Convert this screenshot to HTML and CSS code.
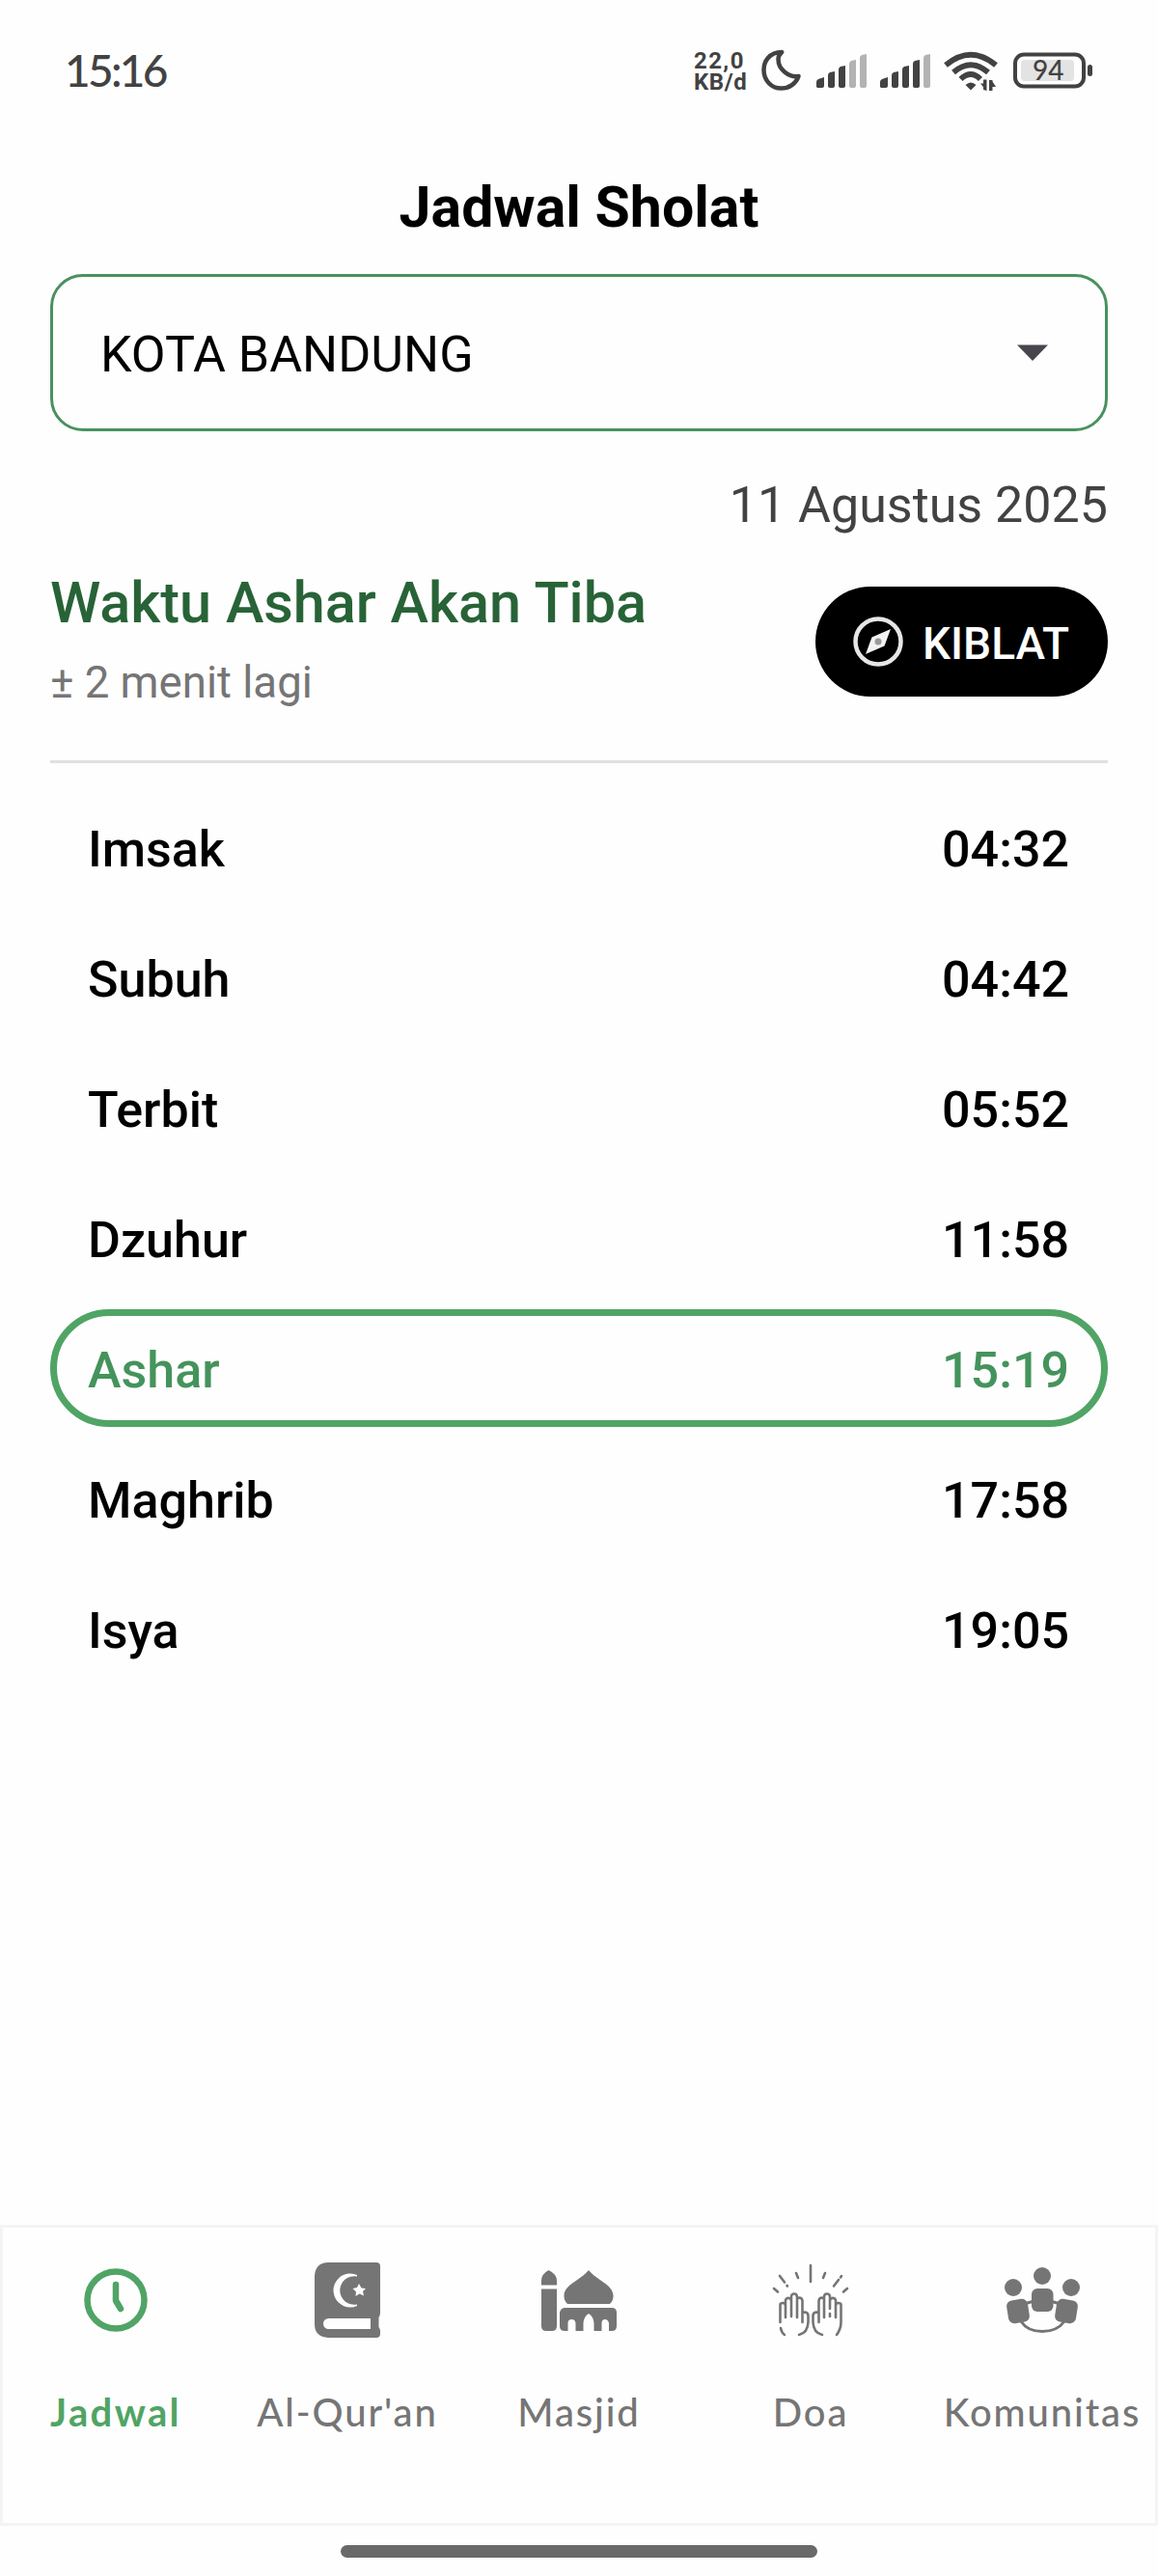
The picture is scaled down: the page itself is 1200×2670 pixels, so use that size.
FILE: index.html
```html
<!DOCTYPE html>
<html lang="id">
<head>
<meta charset="utf-8">
<title>Jadwal Sholat</title>
<link rel="stylesheet" href="styles.css">
</head>
<body>
<div class="screen">
  <header class="status">
    <span class="clock">15:16</span>
    <div class="speed"><span class="rate">22,0</span><span>KB/d</span></div>
    <svg class="sys" width="420" height="90" viewBox="0 0 420 90" fill="#424242">
      <path d="M30.200 24C17 24 11.500 34 11.500 42.500C11.500 53 19 61.500 29.500 61.500C38 61.500 45 56.500 47.500 49C37.500 50.500 26.500 42 26.500 31.500C26.500 28.500 28 26 30.200 24Z" fill="none" stroke="#424242" stroke-width="4.500" stroke-linejoin="round"/>
      <path d="M66 60V55Q66 53 68 52L74 50V59Q74 61 72 61H67ZM78 59V48Q78 46 80 45L85 44V59Q85 61 83 61H80Q78 61 78 59ZM89 59V42Q89 40 91 39L96 38V59Q96 61 94 61H91Q89 61 89 59Z"/>
      <path d="M100 59V36Q100 34 102 33L107 32V59Q107 61 105 61H102Q100 61 100 59ZM111 59V30Q111 28 113 27L118 26V59Q118 61 116 61H113Q111 61 111 59Z" fill="#b3b3b3"/>
      <path d="M132 60V55Q132 53 134 52L140 50V59Q140 61 138 61H133ZM144 59V48Q144 46 146 45L151 44V59Q151 61 149 61H146Q144 61 144 59ZM155 59V42Q155 40 157 39L162 38V59Q162 61 160 61H157Q155 61 155 59ZM166 59V36Q166 34 168 33L173 32V59Q173 61 171 61H168Q166 61 166 59Z"/>
      <path d="M177 59V30Q177 28 179 27L184 26V59Q184 61 182 61H179Q177 61 177 59Z" fill="#b3b3b3"/>
      <g fill="none" stroke="#424242" stroke-width="5.800">
        <path d="M200 37.500Q226 16 252 37.500"/><path d="M208 45Q226 29.500 244 45"/><path d="M215.500 52Q226 42 236 52"/>
      </g>
      <path d="M220.500 58Q226 53 231.500 58L226 63.500Z"/>
      <path d="M239 63V52.500H242.500V64ZM242 64L236 56.500H239.500ZM245 53H248.500V64H245ZM247.500 53L252 60H248Z"/>
      <rect x="272" y="26.500" width="71" height="33" rx="9" fill="none" stroke="#424242" stroke-width="4"/>
      <rect x="278" y="32" width="55" height="22" rx="4" fill="#e3e3e3"/>
      <rect x="347" y="37" width="5" height="12" rx="2.500"/>
      <text class="battery-text" x="290" y="53">94</text>
    </svg>
  </header>

  <h1 class="title">Jadwal Sholat</h1>

  <main class="content">
    <div class="select">
      <span>KOTA BANDUNG</span>
      <svg width="32" height="18" viewBox="0 0 32 18"><path d="M0 .5H32L16 17Z" fill="#49454f"/></svg>
    </div>
    <p class="date">11 Agustus 2025</p>
    <section class="next">
      <div>
        <h2 class="next-title">Waktu Ashar Akan Tiba</h2>
        <p class="next-sub">± 2 menit lagi</p>
      </div>
      <button class="kiblat">
        <svg width="52" height="52" viewBox="0 0 52 52">
          <circle cx="26" cy="26" r="23.500" fill="none" stroke="#e6e6e6" stroke-width="4.500"/>
          <path d="M39 13L32.500 30.500L13 39L19.500 21.500Z" fill="#f2f2f2"/><circle cx="26" cy="26" r="3.500" fill="#999"/>
        </svg>
        <span>KIBLAT</span>
      </button>
    </section>
    <ul class="times">
      <li><span>Imsak</span><span>04:32</span></li>
      <li><span>Subuh</span><span>04:42</span></li>
      <li><span>Terbit</span><span>05:52</span></li>
      <li><span>Dzuhur</span><span>11:58</span></li>
      <li class="active"><span>Ashar</span><span>15:19</span></li>
      <li><span>Maghrib</span><span>17:58</span></li>
      <li><span>Isya</span><span>19:05</span></li>
    </ul>
  </main>

  <nav class="tabs">
    <a class="tab tab-active">
      <svg width="80" height="80" viewBox="0 0 80 80" fill="none" stroke="#50a465">
        <circle cx="40" cy="40" r="29.500" stroke-width="6.500"/>
        <path d="M40 24V40.500L45 49" stroke-width="6.500" stroke-linecap="round" stroke-linejoin="round"/>
      </svg>
      <span>Jadwal</span>
    </a>
    <a class="tab">
      <svg width="80" height="80" viewBox="0 0 80 80" fill="#757575">
        <path fill-rule="evenodd" d="M20 1H70Q74 1 74 5V53Q74 56 72.500 58V68Q74 70 74 72V75Q74 79 70 79H20Q6 78 6 65V15Q7 1 20 1ZM20.500 59A5.300 5.300 0 0 0 20.500 70H64V59ZM50 14Q47 12.500 43 12.500A17.500 17.500 0 0 0 43 47.500Q47 47.500 50 46V44.500A14.800 14.800 0 1 1 50 15.500ZM52 23L50 27L45.500 28L49 31.500L48.500 36L52.500 33.500L57 35.500L56 31L59 28L54.500 27.500Z"/>
      </svg>
      <span>Al-Qur'an</span>
    </a>
    <a class="tab">
      <svg width="80" height="80" viewBox="0 0 80 80" fill="#757575">
        <path d="M1 24.500V20Q1 13 8.500 9Q17 13 17 20V24.500ZM1 28.500H17V67Q17 72 12 72H6Q1 72 1 67ZM28 44Q24 40 24.500 35C25 24 42 19 50 9C58 19 75 24 75.500 35Q76 40 72 44ZM26 48H74Q79 48 79 53V67Q79 72 74 72H71V64Q70 60 67 60Q63.500 60 63.500 64V72H55.500V64Q55 57 50 54Q45 57 44.500 64V72H36.500V64Q36 60 32.500 60Q28.500 60 28.500 64V72H25Q20 72 20 67V53Q21 48 26 48Z"/>
      </svg>
      <span>Masjid</span>
    </a>
    <a class="tab">
      <svg width="80" height="80" viewBox="0 0 80 80" fill="none" stroke="#757575" stroke-width="2.600" stroke-linecap="round" stroke-linejoin="round">
        <path d="M40 4V21M25 12L27 17M55 12L53 17M8 15L13 21.500M15.500 25L16 25.500M72 15L71 16.500M69 19L64 25.500M2 28L6 31.500M78 28L74 31.500"/>
        <path d="M8.500 63V45Q8.500 43 11.500 43Q14 43 14 46V58M14 46V40Q15 37.500 17.500 38Q20 38.500 20 41V57M20 41V36Q20.500 33.500 23 33.500Q26 33.500 26 37V58M26 39Q26.500 37.500 28.500 37.500Q31.500 38 31.500 41V63M31.500 54Q31.500 52.500 34 52.500Q37.500 53 37.500 56V63Q37 74 28 76M9 69Q10 74 13 76"/>
        <path d="M67 76Q71.500 70 71.500 63V45Q71.500 43 68.500 43Q66 43 66 46V58M66 46V40Q65 37.500 62.500 38Q60 38.500 60 41V49M60 54V57M60 41V36Q59.500 33.500 57 33.500Q54 33.500 54 37V58M54 39Q53.500 37.500 51.500 37.500Q48.500 38 48.500 41V63M48.500 54Q48.500 52.500 46 52.500Q42.500 53 42.500 56V63Q43 74 52 76"/>
      </svg>
      <span>Doa</span>
    </a>
    <a class="tab">
      <svg width="80" height="80" viewBox="0 0 80 80" fill="#757575">
        <circle cx="40" cy="15" r="9"/><circle cx="10" cy="27" r="9"/><circle cx="70" cy="27" r="9"/>
        <rect x="29" y="28" width="22.500" height="24" rx="6"/>
        <rect x="4" y="39.500" width="22" height="24" rx="6" transform="rotate(-9 15 51.500)"/>
        <rect x="54" y="39.500" width="22" height="24" rx="6" transform="rotate(9 65 51.500)"/>
        <path d="M23 43.500L30 41.500M57 43.500L50 41.500M18 62C27 76 53 76 63 62" fill="none" stroke="#757575" stroke-width="3"/>
      </svg>
      <span>Komunitas</span>
    </a>
  </nav>
  <div class="home-bar"></div>
</div>
</body>
</html>
```
FILE: styles.css
```css
* { box-sizing: border-box; }
body, h1, h2, p, ul { margin: 0; padding: 0; }
body { background: #fefefe; font-family: Roboto, sans-serif; color: #000; }
.screen { width: 1200px; height: 2670px; display: flex; flex-direction: column; overflow: hidden; }
svg { display: block; flex: none; }

.status { height: 150px; display: flex; align-items: flex-start; padding-left: 67px; color: #424242; }
.clock { flex: none; width: 652px; padding-top: 45px; font: 500 46px/56px Lato, sans-serif; letter-spacing: -2.700px; }
.speed { flex: none; width: 61px; padding-top: 52px; display: flex; flex-direction: column; font: 700 24px/22px Roboto, sans-serif; }
.speed span { letter-spacing: .6px; }
.speed .rate { letter-spacing: 1.400px; }
.sys { margin-top: 30px; }
.battery-text { font: 500 28px Lato, sans-serif; }

.title { height: 134px; font-size: 59px; line-height: 130px; font-weight: 700; text-align: center; }

.content { flex: 1; padding: 0 52px; }
.select { height: 163px; border: 3px solid #48915f; border-radius: 34px; padding: 0 59px 0 49px; display: flex; align-items: center; justify-content: space-between; font-size: 52px; }
.select span { padding-top: 3px; }
.date { margin-top: 47px; line-height: 60px; font-size: 52px; color: #424242; text-align: right; }
.next { height: 237px; border-bottom: 3px solid #e0e0e0; display: flex; justify-content: space-between; padding-top: 36px; }
.next-title { font-size: 59.400px; line-height: 70px; font-weight: 500; color: #286337; }
.next-sub { margin-top: 21px; font-size: 45.600px; line-height: 54px; color: #757575; }
.kiblat { width: 303px; height: 114px; margin-top: 18px; padding: 0 0 0 39px; border: 0; border-radius: 57px; background: #000; color: #fff; display: flex; align-items: center; gap: 20px; font: 500 46px Roboto, sans-serif; }
.kiblat span { padding-top: 3px; }

.times { list-style: none; margin-top: 26px; display: grid; gap: 13px; }
.times li { height: 122px; padding: 5px 40px 0 39px; border-radius: 61px; display: flex; align-items: center; justify-content: space-between; font-size: 52px; font-weight: 500; }
.times .active { border: 7px solid #50a465; padding: 5px 33px 0 32px; color: #45935c; }

.tabs { height: 312px; border: 3px solid #f4f4f4; display: grid; grid-template-columns: repeat(5, 240px); padding-top: 35px; justify-content: center; }
.tab { display: flex; flex-direction: column; align-items: center; gap: 52px; color: #757575; font: 500 40px/48px Lato, sans-serif; white-space: nowrap; }
.tab-active { color: #50a465; font-weight: 700; }
.tab span { letter-spacing: 1.900px; }
.tab-active span { letter-spacing: 2.400px; }
.home-bar { width: 494px; height: 13px; margin: 20px auto 19px; border-radius: 6.500px; background: #696969; }
```
